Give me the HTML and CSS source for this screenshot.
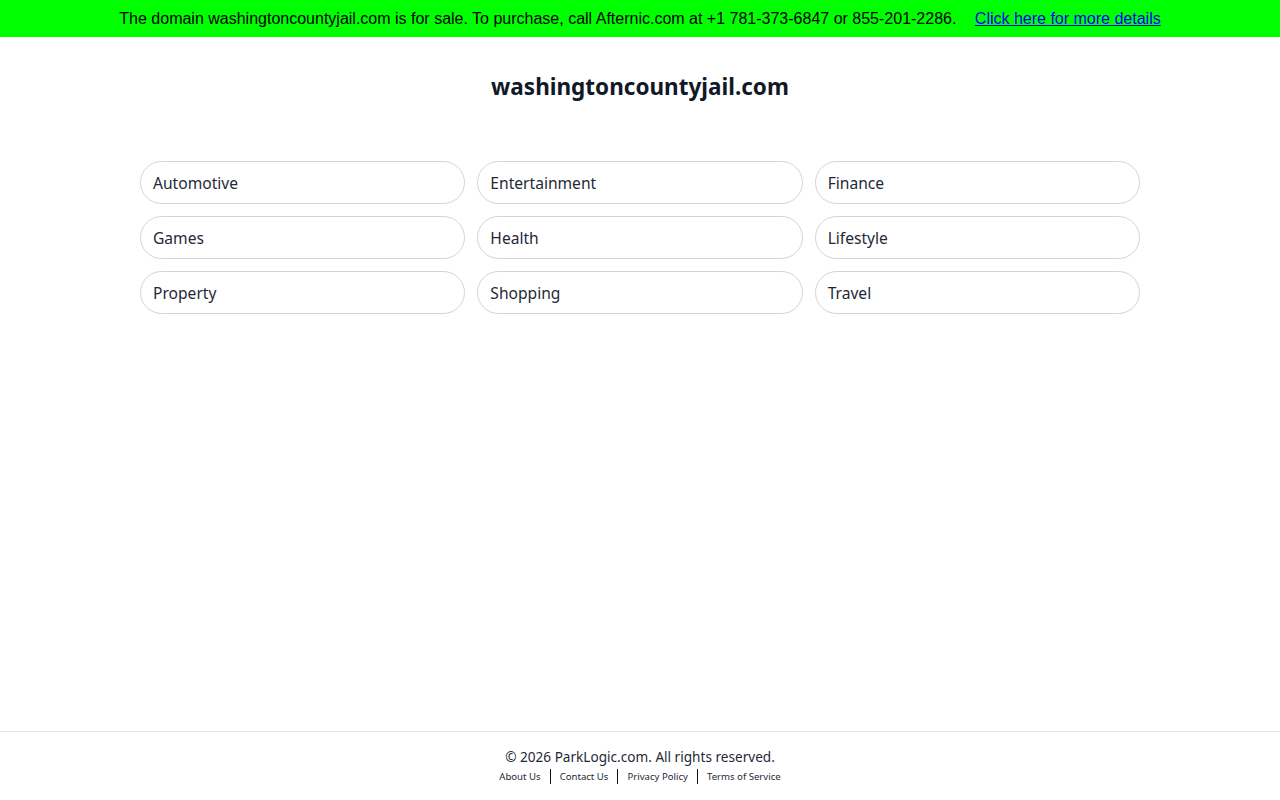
FILE: index.html
```html
<!DOCTYPE html>
<html lang="en">
<head>
  <meta charset="UTF-8" />
  <meta name="viewport" content="width=device-width, initial-scale=1.0"/>
  <title>washingtoncountyjail.com</title>
  <link rel="stylesheet" href="styles.css">
</head>
<body>
  <div class="sale-banner">
    The domain washingtoncountyjail.com is for sale. To purchase, call Afternic.com at +1 781-373-6847 or 855-201-2286.
    <a href="#">Click here for more details</a>
  </div>

  <main class="content">
    <h1 class="domain">washingtoncountyjail.com</h1>

    <div class="categories">
      <a class="category" href="#">Automotive</a>
      <a class="category" href="#">Entertainment</a>
      <a class="category" href="#">Finance</a>
      <a class="category" href="#">Games</a>
      <a class="category" href="#">Health</a>
      <a class="category" href="#">Lifestyle</a>
      <a class="category" href="#">Property</a>
      <a class="category" href="#">Shopping</a>
      <a class="category" href="#">Travel</a>
    </div>
  </main>

  <footer class="footer">
    <div class="copyright">&copy; 2026 ParkLogic.com. All rights reserved.</div>
    <div class="footer-links">
      <a href="#">About Us</a>
      <a href="#">Contact Us</a>
      <a href="#">Privacy Policy</a>
      <a href="#">Terms of Service</a>
    </div>
  </footer>
</body>
</html>
```

FILE: styles.css
```css
body {
  margin: 0;
  font-family: "Noto Sans", "Open Sans", sans-serif;
  color: #1f2937;
  background: #fff;
  display: flex;
  flex-direction: column;
  min-height: 100vh;
}
.sale-banner {
  background-color: #00ff00;
  height: 37px;
  line-height: 37px;
  text-align: center;
  font-family: "Liberation Sans", Arial, sans-serif;
  font-size: 16px;
  color: #000;
}
.sale-banner a {
  color: #0000ee;
  margin-left: 14px;
}
.content {
  flex: 1;
  width: 1000px;
  margin: 0 auto;
}
.domain {
  text-align: center;
  font-size: 22.5px;
  font-weight: bold;
  color: #111827;
  margin: 34px 0 0;
  line-height: 32px;
}
.categories {
  display: grid;
  grid-template-columns: repeat(3, 1fr);
  gap: 12px;
  margin-top: 58px;
}
.category {
  display: block;
  height: 41px;
  line-height: 43px;
  padding: 0 12px;
  border: 1px solid #d4d4d8;
  border-radius: 22px;
  color: #1f2937;
  font-size: 15.6px;
  text-decoration: none;
}
.footer {
  border-top: 1px solid #e5e7eb;
  height: 69px;
  text-align: center;
  box-sizing: border-box;
  padding-top: 15px;
}
.copyright {
  font-size: 13.6px;
  line-height: 20px;
  color: #1f2937;
}
.footer-links {
  display: flex;
  justify-content: center;
  font-size: 9.6px;
  line-height: 15px;
  margin-top: 2px;
}
.footer-links a {
  color: #1f2937;
  text-decoration: none;
  padding: 0 9px;
  border-left: 1px solid #111;
}
.footer-links a:first-child {
  border-left: none;
}
```
